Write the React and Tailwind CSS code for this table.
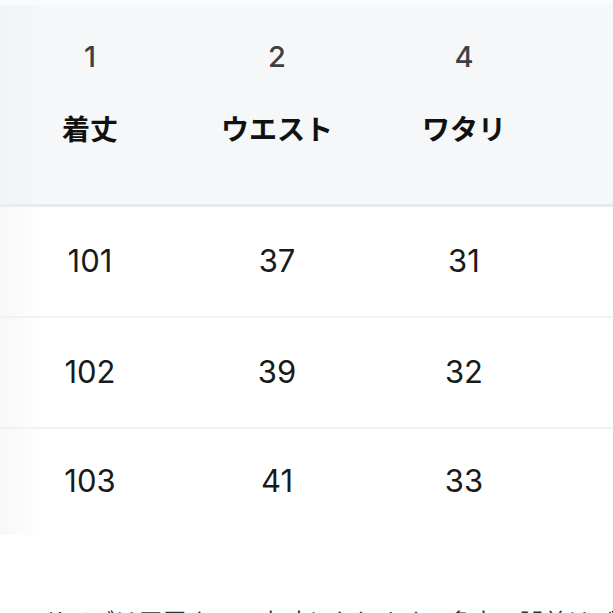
import React from 'react';

const cols = [
  { no: '1', label: '着丈' },
  { no: '2', label: 'ウエスト' },
  { no: '4', label: 'ワタリ' },
];

const rows = [
  ['101', '37', '31'],
  ['102', '39', '32'],
  ['103', '41', '33'],
];

const grid = 'grid grid-cols-[180px_194px_180px]';

export default function App() {
  return (
    <div className="w-[613px] h-[613px] overflow-hidden bg-white font-['Inter','Noto_Sans_CJK_JP',sans-serif]">
      <div className="relative">
        {/* sticky column shadow */}
        <div className="absolute left-0 top-[5px] w-[44px] h-[530px] bg-gradient-to-r from-[#eef0f2] to-transparent opacity-50 pointer-events-none" />
        <div className="h-[5px] bg-[#fafbfc]" />
        <div className="h-[199px] bg-[#f5f7f9] pt-[38px]">
          <div className={grid}>
            {cols.map((c) => (
              <div key={c.no} className="flex flex-col items-center">
                <span className="text-[29px] leading-[28px] text-[#404040] font-medium">{c.no}</span>
                <span className="mt-[43px] text-[28px] leading-[28px] text-[#111] font-bold font-['Noto_Sans_CJK_JP',sans-serif]">{c.label}</span>
              </div>
            ))}
          </div>
        </div>
        <div className="h-[3px] bg-[#e8e9eb]" />
        {rows.map((r, i) => (
          <div
            key={i}
            className={`${grid} items-center ${i < 2 ? 'h-[111px] border-b-2 border-[#f1f2f3]' : 'h-[106px]'}`}
          >
            {r.map((v, j) => (
              <div key={j} className="text-center text-[31px] leading-[30px] text-[#1a1a1a] -mt-[2px]">
                {v}
              </div>
            ))}
          </div>
        ))}
      </div>
      <p className="mt-[70px] px-[14px] text-[24px] leading-[32px] text-[#333] whitespace-nowrap font-['Noto_Sans_CJK_JP',sans-serif]">
        ※ サイズは平置きでの実寸となります。多少の誤差はご了承ください。
      </p>
    </div>
  );
}
